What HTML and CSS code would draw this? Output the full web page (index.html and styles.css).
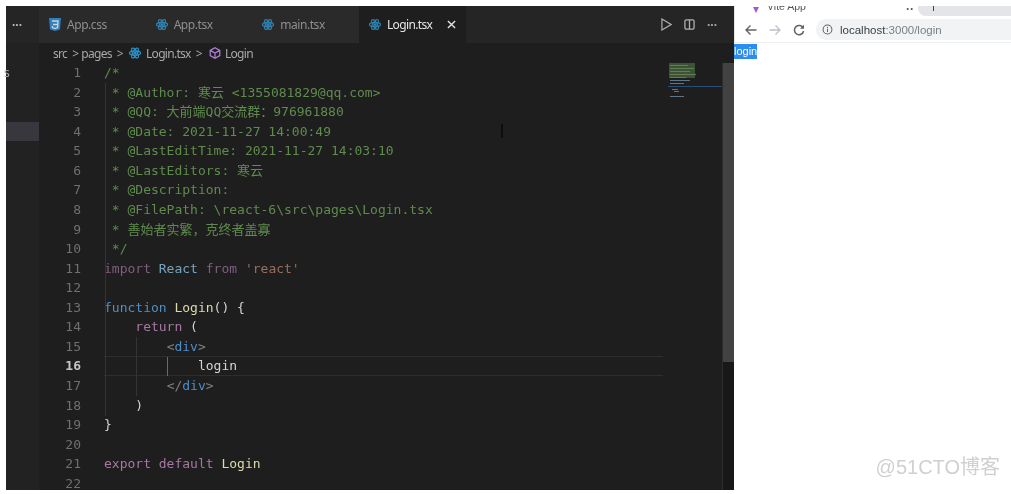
FILE: index.html
```html
<!DOCTYPE html>
<html lang="zh">
<head>
<meta charset="utf-8">
<title>Login.tsx</title>
<link rel="stylesheet" href="styles.css">
</head>
<body>
<svg class="defs" width="0" height="0" aria-hidden="true">
  <symbol id="react" viewBox="0 0 24 24">
    <g fill="none" stroke="#2f8fc4" stroke-width="2.400">
      <ellipse cx="12" cy="12" rx="11" ry="4.400"/>
      <ellipse cx="12" cy="12" rx="11" ry="4.400" transform="rotate(60 12 12)"/>
      <ellipse cx="12" cy="12" rx="11" ry="4.400" transform="rotate(120 12 12)"/>
    </g>
    <circle cx="12" cy="12" r="3" fill="#2f8fc4"/>
  </symbol>
</svg>
<main class="screen">
  <section class="vscode">
    <aside class="sidebar">
      <div class="side-head">···</div>
      <div class="side-label">s</div>
      <div class="side-selected"></div>
    </aside>
    <div class="main">
      <header class="tabs">
        <div class="tab">
          <svg class="tab-icon" viewBox="0 0 12 13"><path d="M0 0h12l-1 11.500-5 1.500-5-1.500z" fill="#2f8fd8"/><path d="M3 3h6l-.4 6.500L6 10.500l-2.600-1-.1-1.500M4 6.500h4.500" fill="none" stroke="#e8f2fa" stroke-width="1.300"/></svg>
          <span>App.css</span>
        </div>
        <div class="tab">
          <svg class="tab-icon"><use href="#react"/></svg>
          <span>App.tsx</span>
        </div>
        <div class="tab">
          <svg class="tab-icon"><use href="#react"/></svg>
          <span>main.tsx</span>
        </div>
        <div class="tab tab-active">
          <svg class="tab-icon"><use href="#react"/></svg>
          <span>Login.tsx</span>
          <svg class="close" viewBox="0 0 10 10"><path d="M1 1l8 8M9 1l-8 8" stroke="#e4e4e4" stroke-width="1.500"/></svg>
        </div>
        <div class="actions">
          <svg class="action" viewBox="0 0 12 14"><path d="M1 1l10 6-10 6z" fill="none" stroke="#b0b0b0" stroke-width="1.300"/></svg>
          <svg class="action" viewBox="0 0 12 12"><rect x="1" y="1" width="10" height="10" rx="1.500" fill="none" stroke="#b0b0b0" stroke-width="1.400"/><path d="M6 1v10" stroke="#b0b0b0" stroke-width="1.400"/></svg>
          <span class="more">···</span>
        </div>
      </header>
      <nav class="crumbs">
        <span>src</span><i>&gt;</i><span>pages</span><i>&gt;</i>
        <svg class="crumb-icon"><use href="#react"/></svg><span>Login.tsx</span><i>&gt;</i>
        <svg class="crumb-icon crumb-cube" viewBox="0 0 12 12"><path d="M6 .8l4.800 2.600v5.200L6 11.200 1.200 8.600V3.400zM1.200 3.400L6 6l4.800-2.600M6 6v5.200" fill="none" stroke="#b180d7" stroke-width="1.200"/></svg><span>Login</span>
      </nav>
      <div class="editor">
        <div class="code">
          <div class="line"><b>1</b><code class="c">/*</code></div>
          <div class="line"><b>2</b><code class="c"> * @Author: 寒云 &lt;1355081829@qq.com&gt;</code></div>
          <div class="line"><b>3</b><code class="c"> * @QQ: 大前端QQ交流群：976961880</code></div>
          <div class="line"><b>4</b><code class="c"> * @Date: 2021-11-27 14:00:49</code></div>
          <div class="line"><b>5</b><code class="c"> * @LastEditTime: 2021-11-27 14:03:10</code></div>
          <div class="line"><b>6</b><code class="c"> * @LastEditors: 寒云</code></div>
          <div class="line"><b>7</b><code class="c"> * @Description:</code></div>
          <div class="line"><b>8</b><code class="c"> * @FilePath: \react-6\src\pages\Login.tsx</code></div>
          <div class="line"><b>9</b><code class="c"> * 善始者实繁，克终者盖寡</code></div>
          <div class="line"><b>10</b><code class="c"> */</code></div>
          <div class="line"><b>11</b><code class="faded"><span class="kw">import</span> <span class="var">React</span> <span class="kw">from</span> <span class="str">'react'</span></code></div>
          <div class="line"><b>12</b><code></code></div>
          <div class="line"><b>13</b><code><span class="fn-kw">function</span> <span class="fn">Login</span>() {</code></div>
          <div class="line"><b>14</b><code>    <span class="kw">return</span> (</code></div>
          <div class="line"><b>15</b><code>        <span class="punc">&lt;</span><span class="fn-kw">div</span><span class="punc">&gt;</span></code></div>
          <div class="line line-current"><b>16</b><code>            login</code></div>
          <div class="line"><b>17</b><code>        <span class="punc">&lt;/</span><span class="fn-kw">div</span><span class="punc">&gt;</span></code></div>
          <div class="line"><b>18</b><code>    )</code></div>
          <div class="line"><b>19</b><code>}</code></div>
          <div class="line"><b>20</b><code></code></div>
          <div class="line"><b>21</b><code><span class="kw">export</span> <span class="kw">default</span> <span class="fn">Login</span></code></div>
          <div class="line"><b>22</b><code></code></div>
          <i class="guide guide-a"></i>
          <i class="guide guide-b"></i>
          <i class="guide guide-c"></i>
          <i class="ibeam"></i>
        </div>
        <div class="minimap">
          <svg width="54" height="40" viewBox="0 0 54 40">
            <rect x="1" y="0" width="26" height="15" fill="#3d5236"/>
            <g fill="#5f7f52">
              <rect x="2" y="2" width="18" height="1"/><rect x="2" y="5" width="24" height="1"/><rect x="2" y="8" width="20" height="1"/><rect x="2" y="11" width="26" height="1"/><rect x="2" y="14" width="16" height="1"/>
            </g>
            <g fill="#5f7688">
              <rect x="2" y="17" width="20" height="1"/><rect x="2" y="20" width="14" height="1"/><rect x="4" y="26" width="6" height="1"/><rect x="6" y="28" width="5" height="1"/><rect x="2" y="33" width="14" height="1"/>
            </g>
            <rect x="0" y="23" width="54" height="1" fill="#264f78"/>
          </svg>
        </div>
        <div class="scrollbar"><div class="thumb"></div></div>
      </div>
    </div>
  </section>
  <section class="browser">
    <div class="strip">
      <span class="favicon"></span>
      <span class="page-title">Vite App</span>
      <span class="strip-dots">··</span>
      <span class="next-tab"><i></i></span>
    </div>
    <div class="toolbar">
      <svg class="nav" viewBox="0 0 12 12"><path d="M11.500 6H1M5.500 1.500L1 6l4.500 4.500" fill="none" stroke="#5f6368" stroke-width="1.400"/></svg>
      <svg class="nav" viewBox="0 0 12 12"><path d="M.5 6H11M6.500 1.500L11 6l-4.500 4.500" fill="none" stroke="#bdc1c6" stroke-width="1.300"/></svg>
      <svg class="nav" viewBox="0 0 12 12"><path d="M10.300 4.200A4.600 4.600 0 1 0 10.600 7" fill="none" stroke="#5f6368" stroke-width="1.500"/><path d="M11 .8v4H7z" fill="#5f6368"/></svg>
      <div class="url">
        <svg class="info" viewBox="0 0 12 12"><circle cx="6" cy="6" r="4.800" fill="none" stroke="#5f6368" stroke-width="1.100"/><path d="M6 5.200v3.400M6 3.200v1.100" stroke="#5f6368" stroke-width="1.100"/></svg>
        <span class="host">localhost</span><span class="path">:3000/login</span>
      </div>
    </div>
    <div class="page"><span class="selected">login</span></div>
    <div class="watermark">@51CTO博客</div>
  </section>
</main>
</body>
</html>
```

FILE: styles.css
```css
* { box-sizing: border-box; }
html, body { margin: 0; height: 100%; background: #fff; }
.defs { position: absolute; }
.screen {
  display: flex;
  height: 494px;
  width: 1011px;
  padding: 6px 0 4px 6px;
  overflow: hidden;
  background: #fff;
  filter: blur(0.6px);
}
.vscode {
  display: flex;
  width: 728px;
  background: #1e1e1e;
  font-family: "Noto Sans", sans-serif;
}
.sidebar {
  width: 33px;
  flex: none;
  background: #222223;
  display: flex;
  flex-direction: column;
}
.side-head {
  height: 37px;
  padding: 0 0 0 6px;
  line-height: 37px;
  color: #bbb;
  font-size: 12px;
  font-weight: 700;
  background: #252526;
}
.side-label {
  margin-top: 20px;
  height: 59px;
  margin-left: -2px;
  color: #aaa;
  font-size: 12px;
  line-height: 20px;
}
.side-selected { height: 19px; background: #37373d; }
.main { flex: 1; min-width: 0; display: flex; flex-direction: column; }
.tabs {
  display: flex;
  height: 37px;
  flex: none;
  background: #252526;
}
.tab {
  width: 106.67px;
  flex: none;
  display: flex;
  align-items: center;
  gap: 6px;
  padding-left: 10px;
  font-size: 12px;
  letter-spacing: -0.45px;
  color: #8f8f8f;
  background: #2a2a2b;
}
.tab-active { background: #1e1e1e; color: #e4e4e4; letter-spacing: -0.65px; }
.tab-icon { width: 12px; height: 13px; flex: none; opacity: .85; }
.close { width: 9px; height: 9px; margin-left: 9px; flex: none; }
.actions {
  flex: 1;
  display: flex;
  align-items: center;
  justify-content: flex-end;
  gap: 12px;
  padding-right: 14px;
}
.action { width: 11px; height: 13px; }
.more { color: #aaa; font-size: 12px; font-weight: 700; width: 13px; }
.crumbs {
  height: 20px;
  flex: none;
  display: flex;
  align-items: center;
  padding-left: 14px;
  font-size: 12px;
  letter-spacing: -0.7px;
  color: #a9a9a9;
}
.crumbs i { font-style: normal; margin: 0 3px 0 5px; font-size: 12px; }
.crumb-icon { width: 12px; height: 12px; margin: 0 5px 0 3px; flex: none; }
.crumb-cube { margin: 0 4px 0 4px; }
.editor { flex: 1; min-height: 0; display: flex; overflow: hidden; }
.code { position: relative; width: 629px; flex: none; }
.line {
  display: flex;
  height: 19.57px;
  line-height: 19.57px;
  font-family: "DejaVu Sans Mono", "Noto Sans CJK SC", monospace;
  font-size: 13px;
  color: #d4d4d4;
}
.line b {
  width: 42px;
  flex: none;
  text-align: right;
  font-weight: 400;
  color: #6f6f6f;
}
.line code {
  font-family: inherit;
  margin-left: 23px;
  white-space: pre;
  flex: 1;
}
.line-current code {
  margin-right: 5px;
  border-top: 1px solid #2e2e2e;
  border-bottom: 1px solid #2e2e2e;
  line-height: 17.57px;
}
.line-current b { color: #c6c6c6; font-weight: 700; }
.c { color: #5f8c4d; }
.kw { color: #a878a4; }
.faded { opacity: .7; }
.var { color: #9cdcfe; }
.str { color: #ce9178; }
.fn-kw { color: #4d8fc9; }
.fn { color: #dcdcaa; }
.punc { color: #808080; }
.guide { position: absolute; width: 1px; background: #343434; }
.guide-a { left: 66px; top: 20px; height: 333px; }
.guide-b { left: 97px; top: 274px; height: 59px; }
.guide-c { left: 128px; top: 294px; height: 19px; background: #6a6a6a; }
.ibeam { position: absolute; left: 462px; top: 61px; width: 2px; height: 14px; background: #0d0d0d; }
.minimap { flex: none; width: 54px; }
.scrollbar {
  flex: none;
  width: 12px;
  margin-left: auto;
  background: #181818;
  border-left: 1px solid #2c2c2c;
}
.thumb { height: 299px; background: #424242; }
.browser {
  position: relative;
  flex: 1;
  min-width: 0;
  display: flex;
  flex-direction: column;
  font-family: "Liberation Sans", sans-serif;
  margin-bottom: -4px;
}
.strip {
  height: 10px;
  flex: none;
  display: flex;
  align-items: flex-end;
  overflow: hidden;
  border-left: 1px solid #e6e6e6;
}
.favicon {
  width: 0;
  height: 0;
  margin: 0 0 3px 18px;
  border: 3px solid transparent;
  border-top: 6px solid #a259d9;
  border-bottom: 0;
}
.page-title { margin: 0 0 3px 8px; font-size: 10.5px; line-height: 14px; color: #555; }
.strip-dots { margin: 0 0 2px 100px; font-size: 12px; line-height: 10px; font-weight: 700; color: #555; }
.next-tab {
  margin-left: 4px;
  flex: 1;
  height: 10px;
  background: #e3e5e8;
  border-radius: 0 0 0 8px;
  padding-left: 15px;
}
.next-tab i { display: block; width: 1px; height: 5px; background: #444; }
.toolbar {
  height: 27px;
  flex: none;
  display: flex;
  align-items: center;
  padding-left: 10px;
  gap: 12px;
  border-left: 1px solid #e6e6e6;
  border-bottom: 1px solid #eceeef;
  background: #fff;
}
.nav { width: 12px; height: 12px; flex: none; margin-top: 2px; }
.url {
  flex: 1;
  height: 21px;
  margin-left: -1px;
  margin-top: 1px;
  display: flex;
  align-items: center;
  padding-left: 6px;
  border-radius: 10px 0 0 10px;
  background: #f1f3f4;
  font-size: 11.5px;
}
.info { width: 11px; height: 11px; margin-right: 7px; flex: none; }
.host { color: #3c4043; }
.path { color: #7b7f84; }
.page { padding-top: 1px; font-size: 11px; line-height: 15px; }
.selected { background: #2d8cf0; color: #fff; display: inline-block; height: 15px; }
.watermark {
  position: absolute;
  right: 11px;
  bottom: 15px;
  font-size: 20px;
  line-height: 24px;
  color: #d0d0d0;
  font-family: "Liberation Sans", "Noto Sans CJK SC", sans-serif;
}
```
